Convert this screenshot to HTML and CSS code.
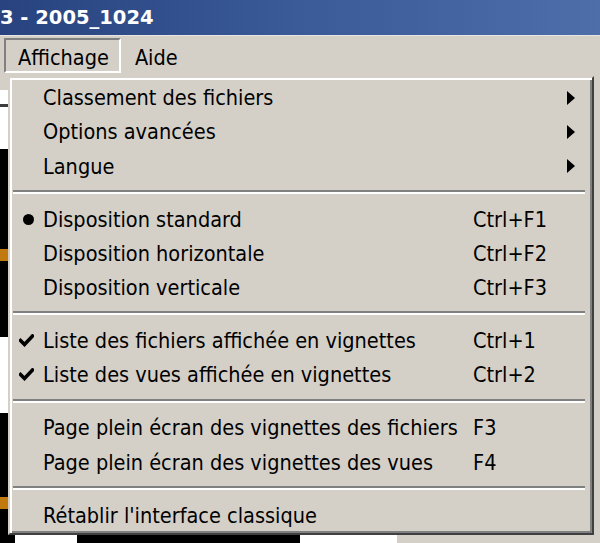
FILE: index.html
```html
<!DOCTYPE html>
<html lang="fr">
<head>
    <meta charset="UTF-8">
    <title>Affichage</title>
    <link rel="stylesheet" href="styles.css">
</head>
<body>
    <div class="titlebar"><span class="title">3 - 2005_1024</span></div>
    <div class="menubar">
        <span class="top-item open">Affichage</span>
        <span class="top-item">Aide</span>
    </div>
    <div class="desk">
        <div class="side-left">
            <div class="blk gray" style="height:14px"></div>
            <div class="blk white" style="height:14px"></div>
            <div class="blk line" style="height:3px"></div>
            <div class="blk white" style="height:42px"></div>
            <div class="blk black" style="height:100px"></div>
            <div class="blk orange" style="height:12px"></div>
            <div class="blk black" style="height:76px"></div>
            <div class="blk white" style="height:76px"></div>
            <div class="blk black" style="height:84px"></div>
            <div class="blk orange" style="height:12px"></div>
            <div class="blk black" style="flex:1"></div>
        </div>
        <div class="under">
            <div class="bottom-row">
                <div class="blk black" style="width:7px"></div>
                <div class="blk white" style="width:62px"></div>
                <div class="blk black" style="width:223px"></div>
                <div class="blk white" style="width:97px"></div>
                <div class="blk gray" style="flex:1"></div>
            </div>
        </div>
        <div class="side-right"></div>

        <div class="dropdown">
            <div class="row"><span class="mark"></span><span class="label">Classement des fichiers</span><span class="key"></span><span class="arrow"></span></div>
            <div class="row"><span class="mark"></span><span class="label">Options avancées</span><span class="key"></span><span class="arrow"></span></div>
            <div class="row"><span class="mark"></span><span class="label">Langue</span><span class="key"></span><span class="arrow"></span></div>
            <div class="sep"></div>
            <div class="row"><span class="mark"><span class="bullet"></span></span><span class="label">Disposition standard</span><span class="key">Ctrl+F1</span></div>
            <div class="row"><span class="mark"></span><span class="label">Disposition horizontale</span><span class="key">Ctrl+F2</span></div>
            <div class="row"><span class="mark"></span><span class="label">Disposition verticale</span><span class="key">Ctrl+F3</span></div>
            <div class="sep"></div>
            <div class="row"><span class="mark"><svg class="check" viewBox="0 0 15 13" width="15" height="13"><polyline points="1.5,6.5 5.5,10.5 13.5,2" /></svg></span><span class="label">Liste des fichiers affichée en vignettes</span><span class="key">Ctrl+1</span></div>
            <div class="row"><span class="mark"><svg class="check" viewBox="0 0 15 13" width="15" height="13"><polyline points="1.5,6.5 5.5,10.5 13.5,2" /></svg></span><span class="label">Liste des vues affichée en vignettes</span><span class="key">Ctrl+2</span></div>
            <div class="sep"></div>
            <div class="row"><span class="mark"></span><span class="label">Page plein écran des vignettes des fichiers</span><span class="key">F3</span></div>
            <div class="row"><span class="mark"></span><span class="label">Page plein écran des vignettes des vues</span><span class="key">F4</span></div>
            <div class="sep"></div>
            <div class="row"><span class="mark"></span><span class="label">Rétablir l'interface classique</span><span class="key"></span></div>
        </div>
    </div>
</body>
</html>
```

FILE: styles.css
```css
body {
    margin: 0;
    width: 600px;
    height: 543px;
    overflow: hidden;
    background: #000;
    font-family: "DejaVu Sans", Tahoma, sans-serif;
    font-stretch: condensed;
    color: #000;
}
.titlebar {
    height: 35px;
    background: linear-gradient(to right, #28437f, #3a5a98 50%, #4d6ea9);
    border-bottom: 1px solid #e8e6e0;
    display: flex;
    align-items: center;
    overflow: hidden;
}
.title {
    color: #fff;
    font-weight: bold;
    font-size: 19.5px;
    font-stretch: normal;
    white-space: nowrap;
}
.menubar {
    height: 40px;
    background: #d4d0c8;
    padding: 2px 0 0 4px;
    box-sizing: border-box;
    display: flex;
    align-items: flex-start;
}
.top-item {
    height: 35px;
    line-height: 35px;
    font-size: 21.5px;
    padding: 0 10px 0 12px;
    border: 2px solid transparent;
    box-sizing: border-box;
}
.top-item.open {
    border-color: #808080 #fff #fff #808080;
}
.desk {
    position: relative;
    height: 467px;
    display: flex;
}
.side-left {
    width: 8px;
    display: flex;
    flex-direction: column;
}
.under {
    flex: 1;
    display: flex;
    flex-direction: column;
    justify-content: flex-end;
    background: #000;
}
.bottom-row {
    height: 8px;
    display: flex;
}
.side-right {
    width: 6px;
    background: #d4d0c8;
}
.blk.gray { background: #d4d0c8; }
.blk.white { background: #fff; }
.blk.black { background: #000; }
.blk.line { background: #3c3c3c; }
.blk.orange { background: #c07a10; }

.dropdown {
    position: absolute;
    left: 8px;
    top: 0;
    width: 586px;
    height: 459px;
    box-sizing: border-box;
    background: #d4d0c8;
    border-style: solid;
    border-width: 2px;
    border-color: #d4d0c8 #404040 #404040 #d4d0c8;
    box-shadow: inset 2px 2px 0 #fff, inset -2px -2px 0 #808080;
    padding: 2px;
    font-size: 21.5px;
}
.row {
    height: 34.25px;
    display: flex;
    align-items: center;
    white-space: nowrap;
    padding-top: 1px;
    box-sizing: border-box;
}
.mark {
    width: 31px;
    height: 100%;
    display: flex;
    align-items: center;
    justify-content: center;
}
.bullet {
    width: 11px;
    height: 11px;
    border-radius: 50%;
    background: #000;
    margin-left: 1px;
}
.check {
    display: block;
    margin-right: 2px;
}
.check polyline {
    fill: none;
    stroke: #000;
    stroke-width: 3.6;
    stroke-linecap: square;
}
.label {
    width: 430px;
}
.key {
    flex: 1;
}
.arrow {
    width: 0;
    height: 0;
    border-style: solid;
    border-width: 7.5px 0 7.5px 8px;
    border-color: transparent transparent transparent #000;
    margin-right: 15px;
}
.sep {
    height: 18.75px;
    padding: 7px 5px 0 1px;
    box-sizing: border-box;
}
.sep::before {
    content: "";
    display: block;
    height: 2px;
    background: #808080;
    border-bottom: 2px solid #fff;
}
```
